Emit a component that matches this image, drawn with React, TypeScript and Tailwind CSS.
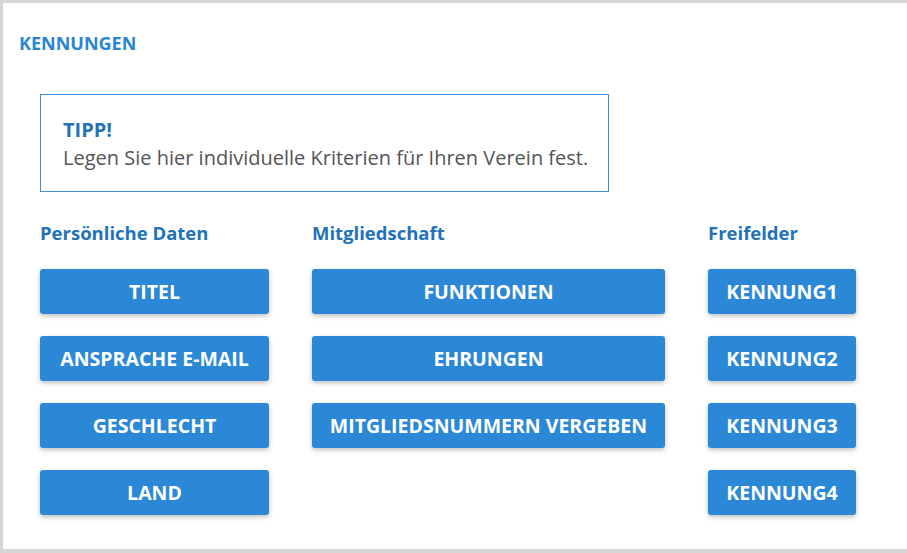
const persoenlich = ["Titel", "Ansprache E-Mail", "Geschlecht", "Land"];
const mitgliedschaft = ["Funktionen", "Ehrungen", "Mitgliedsnummern vergeben"];
const freifelder = ["Kennung1", "Kennung2", "Kennung3", "Kennung4"];

function Column({
  title,
  items,
  width,
}: {
  title: string;
  items: string[];
  width: string;
}) {
  return (
    <div className={`flex flex-col ${width}`}>
      <h3 className="text-[18.5px] leading-[28px] font-bold text-[#2272b8]">{title}</h3>
      <div className="mt-[22px] flex flex-col gap-[22px]">
        {items.map((item) => (
          <button
            key={item}
            className="h-[45px] w-full rounded-[3px] bg-[#2b88d6] text-[19.5px] font-bold uppercase text-white shadow-[0_2px_5px_rgba(0,0,0,0.25)]"
          >
            {item}
          </button>
        ))}
      </div>
    </div>
  );
}

export default function App() {
  return (
    <div
      className="flex h-[553px] w-[907px] flex-col bg-[#d6d6d6] pt-[3px] pb-[4px] pl-[3px]"
      style={{ fontFamily: "'Open Sans', sans-serif" }}
    >
      <div className="flex-1 bg-white pt-[28px] pl-[16px]">
        <h2 className="text-[18px] leading-[24px] font-bold uppercase text-[#2a86d2]">
          Kennungen
        </h2>
        <div className="ml-[21px] mt-[39px] w-[569px] border border-[#3a90d8] pt-[21px] pb-[19px] pl-[22px]">
          <div className="text-[20px] leading-[28px] font-bold uppercase text-[#2272b8]">Tipp!</div>
          <p className="text-[20px] leading-[28px] text-[#555555]">
            Legen Sie hier individuelle Kriterien für Ihren Verein fest.
          </p>
        </div>
        <div className="ml-[21px] mt-[27px] flex gap-[43px]">
          <Column title="Persönliche Daten" items={persoenlich} width="w-[229px]" />
          <Column title="Mitgliedschaft" items={mitgliedschaft} width="w-[353px]" />
          <Column title="Freifelder" items={freifelder} width="w-[148px]" />
        </div>
      </div>
    </div>
  );
}
